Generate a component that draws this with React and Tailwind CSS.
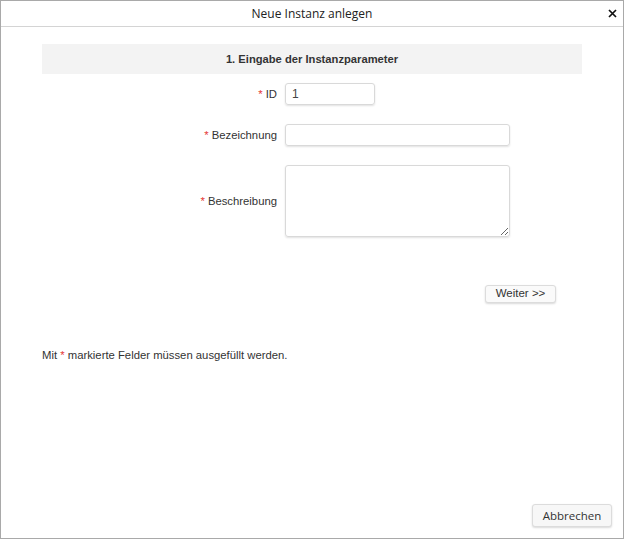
export default function App() {
  const label = 'text-right text-[11.3px] text-[#333] pr-2';
  const star = <span className="text-[#e53935] mr-[3px]">*</span>;

  return (
    <div className="w-[625px] h-[539px] bg-white">
      <div className="w-[624px] h-[539px] border border-[#a9a9a9] flex flex-col font-['Liberation_Sans',Arial,sans-serif]">
        <div className="relative h-[26px] shrink-0 border-b border-[#d4d4d4] flex items-center justify-center">
          <span className="text-[12px] text-[#222] font-['Open_Sans',sans-serif]">Neue Instanz anlegen</span>
          <svg className="absolute right-[6px] top-[8px]" width="9" height="9" viewBox="0 0 9 9">
            <path d="M1 1 L8 8 M8 1 L1 8" stroke="#111" strokeWidth="1.7" />
          </svg>
        </div>

        <div className="flex-1 flex flex-col px-[41px]">
          <div className="mt-[17px] h-[30px] bg-[#f3f3f3] flex items-center justify-center text-[11.2px] font-bold text-[#333]">
            1. Eingabe der Instanzparameter
          </div>

          <div className="grid grid-cols-[243px_1fr] items-center mt-[9px] gap-y-[19px]">
            <div className={label}>{star}ID</div>
            <input
              defaultValue="1"
              className="w-[90px] h-[22px] rounded-[3px] border border-[#d9d9d9] shadow-[0_1px_2px_rgba(0,0,0,0.12)] px-[6px] text-[12px] text-[#444] outline-none"
            />

            <div className={label}>{star}Bezeichnung</div>
            <input className="w-[225px] h-[22px] rounded-[3px] border border-[#d9d9d9] shadow-[0_1px_2px_rgba(0,0,0,0.12)] px-[6px] text-[12px] outline-none" />

            <div className={label}>{star}Beschreibung</div>
            <textarea className="w-[225px] h-[72px] rounded-[3px] border border-[#d9d9d9] shadow-[0_1px_2px_rgba(0,0,0,0.12)] px-[6px] text-[12px] outline-none block" />
          </div>

          <div className="flex justify-end mt-[48px] pr-[26px]">
            <button className="w-[71px] h-[18px] rounded-[3px] border border-[#dcdcdc] bg-[#fafafa] shadow-[0_1px_2px_rgba(0,0,0,0.15)] text-[11.5px] text-[#333] leading-none">
              Weiter &gt;&gt;
            </button>
          </div>

          <div className="mt-[44px] text-[11.3px] text-[#333]">
            Mit <span className="text-[#e53935]">*</span> markierte Felder müssen ausgefüllt werden.
          </div>
        </div>

        <div className="flex justify-end pr-[11px] pb-[11px]">
          <button className="w-[80px] h-[23px] rounded-[3px] border border-[#dcdcdc] bg-[#f7f7f7] shadow-[0_1px_2px_rgba(0,0,0,0.15)] text-[11.5px] text-[#333] font-['Open_Sans',sans-serif] leading-none">
            Abbrechen
          </button>
        </div>
      </div>
    </div>
  );
}
